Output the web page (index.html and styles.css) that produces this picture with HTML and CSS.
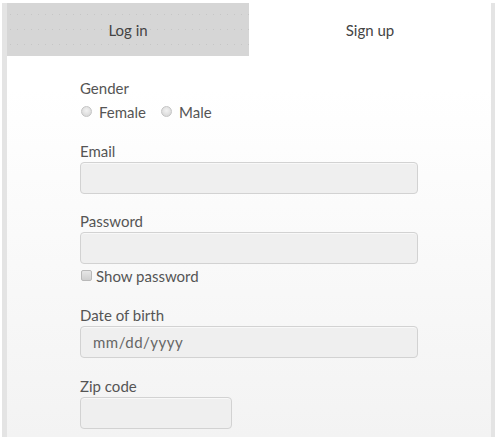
FILE: index.html
```html
<!DOCTYPE html>
<html>
<head>
<meta charset="utf-8">
<link rel="stylesheet" href="styles.css">
</head>
<body>
<div class="frame">
  <div class="tabs">
    <div class="tab tab-inactive">Log in</div>
    <div class="tab tab-active">Sign up</div>
  </div>
  <form class="form">
    <div class="group group-gender">
      <div class="label">Gender</div>
      <div class="radios">
        <label class="choice"><input type="radio" name="g" class="radio"> Female</label>
        <label class="choice"><input type="radio" name="g" class="radio"> Male</label>
      </div>
    </div>
    <div class="group group-email">
      <div class="label">Email</div>
      <input type="text" class="field">
    </div>
    <div class="group group-password">
      <div class="label">Password</div>
      <input type="password" class="field">
      <label class="check-row"><input type="checkbox" class="check"> Show password</label>
    </div>
    <div class="group group-date">
      <div class="label">Date of birth</div>
      <input type="text" class="field field-date" placeholder="mm/dd/yyyy">
    </div>
    <div class="group">
      <div class="label">Zip code</div>
      <input type="text" class="field field-zip">
    </div>
  </form>
</div>
</body>
</html>
```

FILE: styles.css
```css
html, body {
  margin: 0;
  padding: 0;
  background: #ffffff;
}
body {
  font-family: "Lato", "DejaVu Sans", sans-serif;
  color: #555;
  height: 440px;
  overflow: hidden;
}
.frame {
  margin: 3px 5px 0 2px;
  border-left: 5px solid #e4e4e4;
  border-right: 4px solid #e4e4e4;
  height: 434px;
  background: linear-gradient(#ffffff 0%, #ffffff 20%, #f3f3f3 100%);
}
.tabs {
  display: flex;
  height: 53px;
}
.tab {
  flex: 1;
  display: flex;
  align-items: center;
  justify-content: center;
  font-size: 15px;
  color: #444;
  padding-top: 1px;
}
.tab-inactive {
  background-color: #d6d6d6;
  background-image: radial-gradient(circle, #c6c6c6 0.8px, transparent 1px);
  background-size: 7px 15px;
  background-position: 0 4px;
}
.tab-active {
  background: transparent;
}
.form {
  padding: 22px 0 0 73px;
  margin: 0;
}
.group {
  margin-bottom: 17px;
}
.group-gender {
  margin-bottom: 19px;
}
.group-email {
  margin-bottom: 17px;
}
.group-password {
  margin-bottom: 19px;
}
.group-date {
  margin-bottom: 18px;
}
.label {
  font-size: 15px;
  line-height: 21px;
}
.radios {
  display: flex;
  gap: 14px;
  margin-top: 3px;
}
.choice, .check-row {
  display: flex;
  align-items: center;
  font-size: 15px;
  line-height: 20px;
  color: #555;
}
.radio {
  appearance: none;
  -webkit-appearance: none;
  width: 11px;
  height: 11px;
  margin: 0 7px 2px 1px;
  border-radius: 50%;
  border: 1px solid #c4c4c4;
  background: radial-gradient(circle at 50% 40%, #f2f2f2, #d2d2d2);
  box-sizing: border-box;
}
.check-row {
  margin-top: 2px;
}
.check {
  appearance: none;
  -webkit-appearance: none;
  width: 11px;
  height: 11px;
  margin: 0 4px 1px 1px;
  border-radius: 2px;
  border: 1px solid #b9b9b9;
  background: linear-gradient(#e6e6e6, #cfcfcf);
  box-sizing: border-box;
}
.field {
  display: block;
  box-sizing: border-box;
  width: 338px;
  height: 32px;
  margin: 0;
  border: 1px solid #d2d2d2;
  border-radius: 4px;
  background: #efefef;
  box-shadow: inset 0 1px 0 #f8f8f8;
  font-family: "Lato", "DejaVu Sans", sans-serif;
  font-size: 15px;
  color: #666;
  padding: 0 12px;
}
.field-date::placeholder {
  color: #666;
  letter-spacing: 0.5px;
}
.field-zip {
  width: 152px;
}
```
